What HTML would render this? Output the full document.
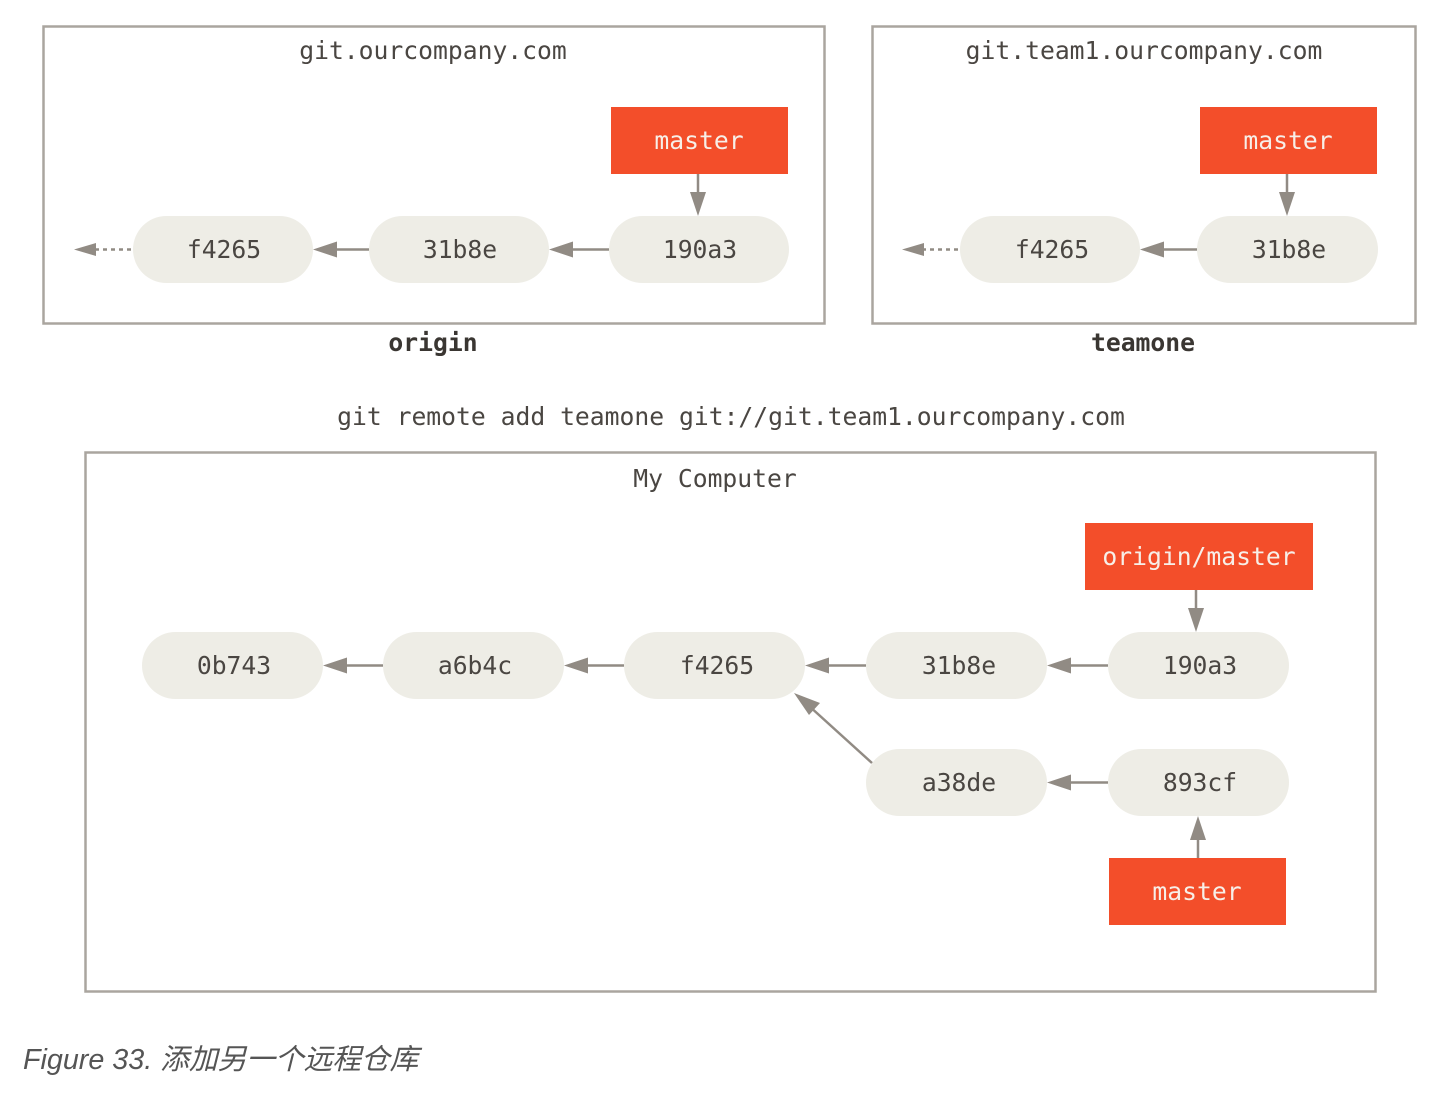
<!DOCTYPE html>
<html><head><meta charset="utf-8"><style>
html,body{margin:0;padding:0;background:#fff;width:1448px;height:1096px;overflow:hidden}
svg{position:absolute;left:0;top:0}
.m{font-family:"DejaVu Sans Mono","Liberation Mono",monospace;font-size:24.7px;fill:#4a4642}
.w{fill:#f7efe8}
.b{font-weight:bold;fill:#3a3632}
.cap{position:absolute;left:23px;top:1037px;font-family:"Liberation Sans","Noto Sans CJK SC",sans-serif;font-style:italic;font-size:28.7px;color:#555}
</style></head><body>
<svg width="1448" height="1096" viewBox="0 0 1448 1096">
<g fill="none" stroke="#aaa59f" stroke-width="2.5">
<rect x="43.5" y="26.5" width="781" height="297"/>
<rect x="872.5" y="26.5" width="543" height="297"/>
<rect x="85.5" y="452.5" width="1290" height="539"/>
</g>
<g fill="#eeede6">
<rect x="133" y="216" width="180" height="67" rx="33.5"/>
<rect x="369" y="216" width="180" height="67" rx="33.5"/>
<rect x="609" y="216" width="180" height="67" rx="33.5"/>
<rect x="960" y="216" width="180" height="67" rx="33.5"/>
<rect x="1197" y="216" width="181" height="67" rx="33.5"/>
<rect x="142" y="632" width="181" height="67" rx="33.5"/>
<rect x="383" y="632" width="181" height="67" rx="33.5"/>
<rect x="624" y="632" width="181" height="67" rx="33.5"/>
<rect x="866" y="632" width="181" height="67" rx="33.5"/>
<rect x="1108" y="632" width="181" height="67" rx="33.5"/>
<rect x="866" y="749" width="181" height="67" rx="33.5"/>
<rect x="1108" y="749" width="181" height="67" rx="33.5"/>
</g>
<g fill="#f34e2a">
<rect x="611" y="107" width="177" height="67"/>
<rect x="1200" y="107" width="177" height="67"/>
<rect x="1085" y="523" width="228" height="67"/>
<rect x="1109" y="858" width="177" height="67"/>
</g>
<g stroke="#918b84" stroke-width="2.5" fill="none">
<line x1="369" y1="249.5" x2="330" y2="249.5"/>
<line x1="609" y1="249.5" x2="570" y2="249.5"/>
<line x1="131" y1="249.5" x2="92" y2="249.5" stroke-dasharray="4 4"/>
<line x1="698" y1="174" x2="698" y2="200"/>
<line x1="1197" y1="249.5" x2="1158" y2="249.5"/>
<line x1="958" y1="249.5" x2="920" y2="249.5" stroke-dasharray="4 4"/>
<line x1="1287" y1="174" x2="1287" y2="200"/>
<line x1="383" y1="665.5" x2="342" y2="665.5"/>
<line x1="624" y1="665.5" x2="583" y2="665.5"/>
<line x1="866" y1="665.5" x2="825" y2="665.5"/>
<line x1="1108" y1="665.5" x2="1067" y2="665.5"/>
<line x1="1108" y1="782.5" x2="1067" y2="782.5"/>
<line x1="1196" y1="590" x2="1196" y2="615"/>
<line x1="1198" y1="858" x2="1198" y2="835"/>
<line x1="872" y1="763" x2="808" y2="705"/>
</g>
<g fill="#918b84">
<polygon points="313,249.5 337,241.5 337,257.5"/>
<polygon points="549,249.5 573,241.5 573,257.5"/>
<polygon points="74,249.5 96,243 96,256"/>
<polygon points="698,216 690,192 706,192"/>
<polygon points="1140,249.5 1164,241.5 1164,257.5"/>
<polygon points="902,249.5 924,243 924,256"/>
<polygon points="1287,216 1279,192 1295,192"/>
<polygon points="323,665.5 347,657.5 347,673.5"/>
<polygon points="564,665.5 588,657.5 588,673.5"/>
<polygon points="805,665.5 829,657.5 829,673.5"/>
<polygon points="1047,665.5 1071,657.5 1071,673.5"/>
<polygon points="1047,782.5 1071,774.5 1071,790.5"/>
<polygon points="1196,632 1188,608 1204,608"/>
<polygon points="1198,816 1190,840 1206,840"/>
<polygon points="794,693 820,703 809,715"/>
</g>
<g class="m" text-anchor="middle">
<text x="433" y="59">git.ourcompany.com</text>
<text x="1144" y="59">git.team1.ourcompany.com</text>
<text x="224" y="258">f4265</text>
<text x="460" y="258">31b8e</text>
<text x="700" y="258">190a3</text>
<text x="1052" y="258">f4265</text>
<text x="1289" y="258">31b8e</text>
<text class="w" x="699" y="149">master</text>
<text class="w" x="1288" y="149">master</text>
<text class="b" x="433" y="351">origin</text>
<text class="b" x="1143" y="351">teamone</text>
<text x="731" y="425">git remote add teamone git://git.team1.ourcompany.com</text>
<text x="715" y="487">My Computer</text>
<text class="w" x="1199" y="565">origin/master</text>
<text x="234" y="674">0b743</text>
<text x="475" y="674">a6b4c</text>
<text x="717" y="674">f4265</text>
<text x="959" y="674">31b8e</text>
<text x="1200" y="674">190a3</text>
<text x="959" y="791">a38de</text>
<text x="1200" y="791">893cf</text>
<text class="w" x="1197" y="900">master</text>
</g>
</svg>
<div class="cap">Figure 33. 添加另一个远程仓库</div>
</body></html>
